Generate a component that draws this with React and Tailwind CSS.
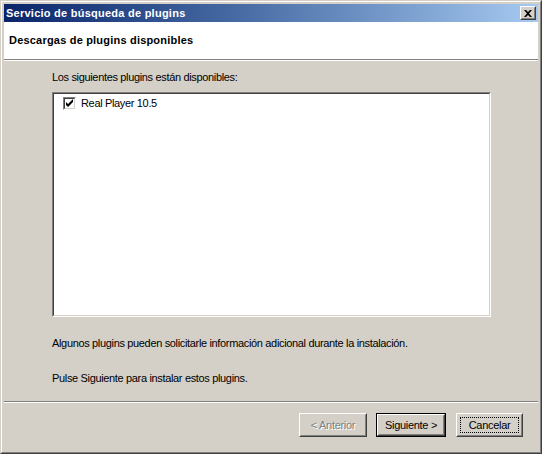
import React from 'react';

const FONT = "font-['Liberation_Sans',Arial,sans-serif]";

const Button = ({ children, disabled, isDefault, focused, width }) => (
  <div
    className={`h-[24px] ${width} ${
      isDefault ? 'border border-black' : ''
    }`}
  >
    <div className="h-full border border-t-white border-l-white border-b-[#404040] border-r-[#404040]">
      <div className="h-full border border-t-[#d4d0c8] border-l-[#d4d0c8] border-b-[#808080] border-r-[#808080] bg-[#d4d0c8] p-[2px]">
        <div
          className={`h-full flex items-center justify-center text-[11px] leading-[13px] tracking-[-0.3px] ${
            focused ? 'border border-dotted border-black' : ''
          } ${
            disabled
              ? 'text-[#808080] [text-shadow:1px_1px_0_#ffffff]'
              : 'text-black'
          }`}
        >
          {children}
        </div>
      </div>
    </div>
  </div>
);

const Checkbox = () => (
  <div className="w-[13px] h-[13px] border border-t-[#808080] border-l-[#808080] border-b-white border-r-white">
    <div className="w-full h-full border border-t-[#404040] border-l-[#404040] border-b-[#d4d0c8] border-r-[#d4d0c8] bg-white">
      <svg width="9" height="9" viewBox="0 0 9 9" className="block">
        <path d="M1 3v3l2 2 5-5V0L3 5z" fill="#000" />
      </svg>
    </div>
  </div>
);

export default function App() {
  return (
    <div className={`w-[542px] h-[454px] ${FONT} bg-[#d4d0c8]`}>
      <div className="w-full h-full border border-t-[#d4d0c8] border-l-[#d4d0c8] border-b-[#404040] border-r-[#404040]">
        <div className="w-full h-full border border-t-white border-l-white border-b-[#808080] border-r-[#808080] p-[2px] flex flex-col">
          {/* title bar */}
          <div className="h-[18px] shrink-0 flex items-center justify-between pl-[2px] pr-[2px] bg-gradient-to-r from-[#0a246a] to-[#a6caf0]">
            <span className="text-white font-bold text-[11px] leading-[13px] tracking-[0.25px]">
              Servicio de búsqueda de plugins
            </span>
            <div className="w-[16px] h-[14px] border border-t-white border-l-white border-b-[#404040] border-r-[#404040]">
              <div className="w-full h-full border border-t-[#d4d0c8] border-l-[#d4d0c8] border-b-[#808080] border-r-[#808080] bg-[#d4d0c8] flex items-center justify-center">
                <svg width="8" height="7" viewBox="0 0 8 7" className="block">
                  <path
                    d="M0 0h2l2 2 2-2h2L5 3.5 8 7H6L4 5 2 7H0l3-3.5z"
                    fill="#000"
                  />
                </svg>
              </div>
            </div>
          </div>

          {/* header */}
          <div className="h-[37px] shrink-0 bg-white flex items-center pl-[5px]">
            <span className="font-bold text-[11px] leading-[13px] tracking-[0.2px] text-black">
              Descargas de plugins disponibles
            </span>
          </div>
          <div className="h-px bg-[#808080] shrink-0" />
          <div className="h-px bg-white shrink-0" />

          {/* body */}
          <div className="flex-1 flex flex-col pl-[48px] pr-[47px] text-[11px] leading-[13px] tracking-[-0.34px] text-black">
            <p className="mt-[10px]">Los siguientes plugins están disponibles:</p>
            <div className="mt-[8px] h-[225px] border border-t-[#808080] border-l-[#808080] border-b-white border-r-white">
              <div className="w-full h-full border border-t-[#404040] border-l-[#404040] border-b-[#d4d0c8] border-r-[#d4d0c8] bg-white pt-[3px] pl-[9px]">
                <div className="flex items-center gap-[5px] h-[13px]">
                  <Checkbox />
                  <span>Real Player 10.5</span>
                </div>
              </div>
            </div>
            <p className="mt-[20px]">
              Algunos plugins pueden solicitarle información adicional durante la instalación.
            </p>
            <p className="mt-[22px]">Pulse Siguiente para instalar estos plugins.</p>
          </div>

          <div className="h-px bg-[#808080] shrink-0" />
          <div className="h-px bg-white shrink-0" />

          {/* buttons */}
          <div className="h-[47px] shrink-0 flex justify-end items-start pt-[10px] pr-[15px]">
            <Button disabled width="w-[68px]">&lt; Anterior</Button>
            <div className="w-[9px]" />
            <Button isDefault width="w-[70px]">Siguiente &gt;</Button>
            <div className="w-[10px]" />
            <Button focused width="w-[67px]">Cancelar</Button>
          </div>
        </div>
      </div>
    </div>
  );
}
